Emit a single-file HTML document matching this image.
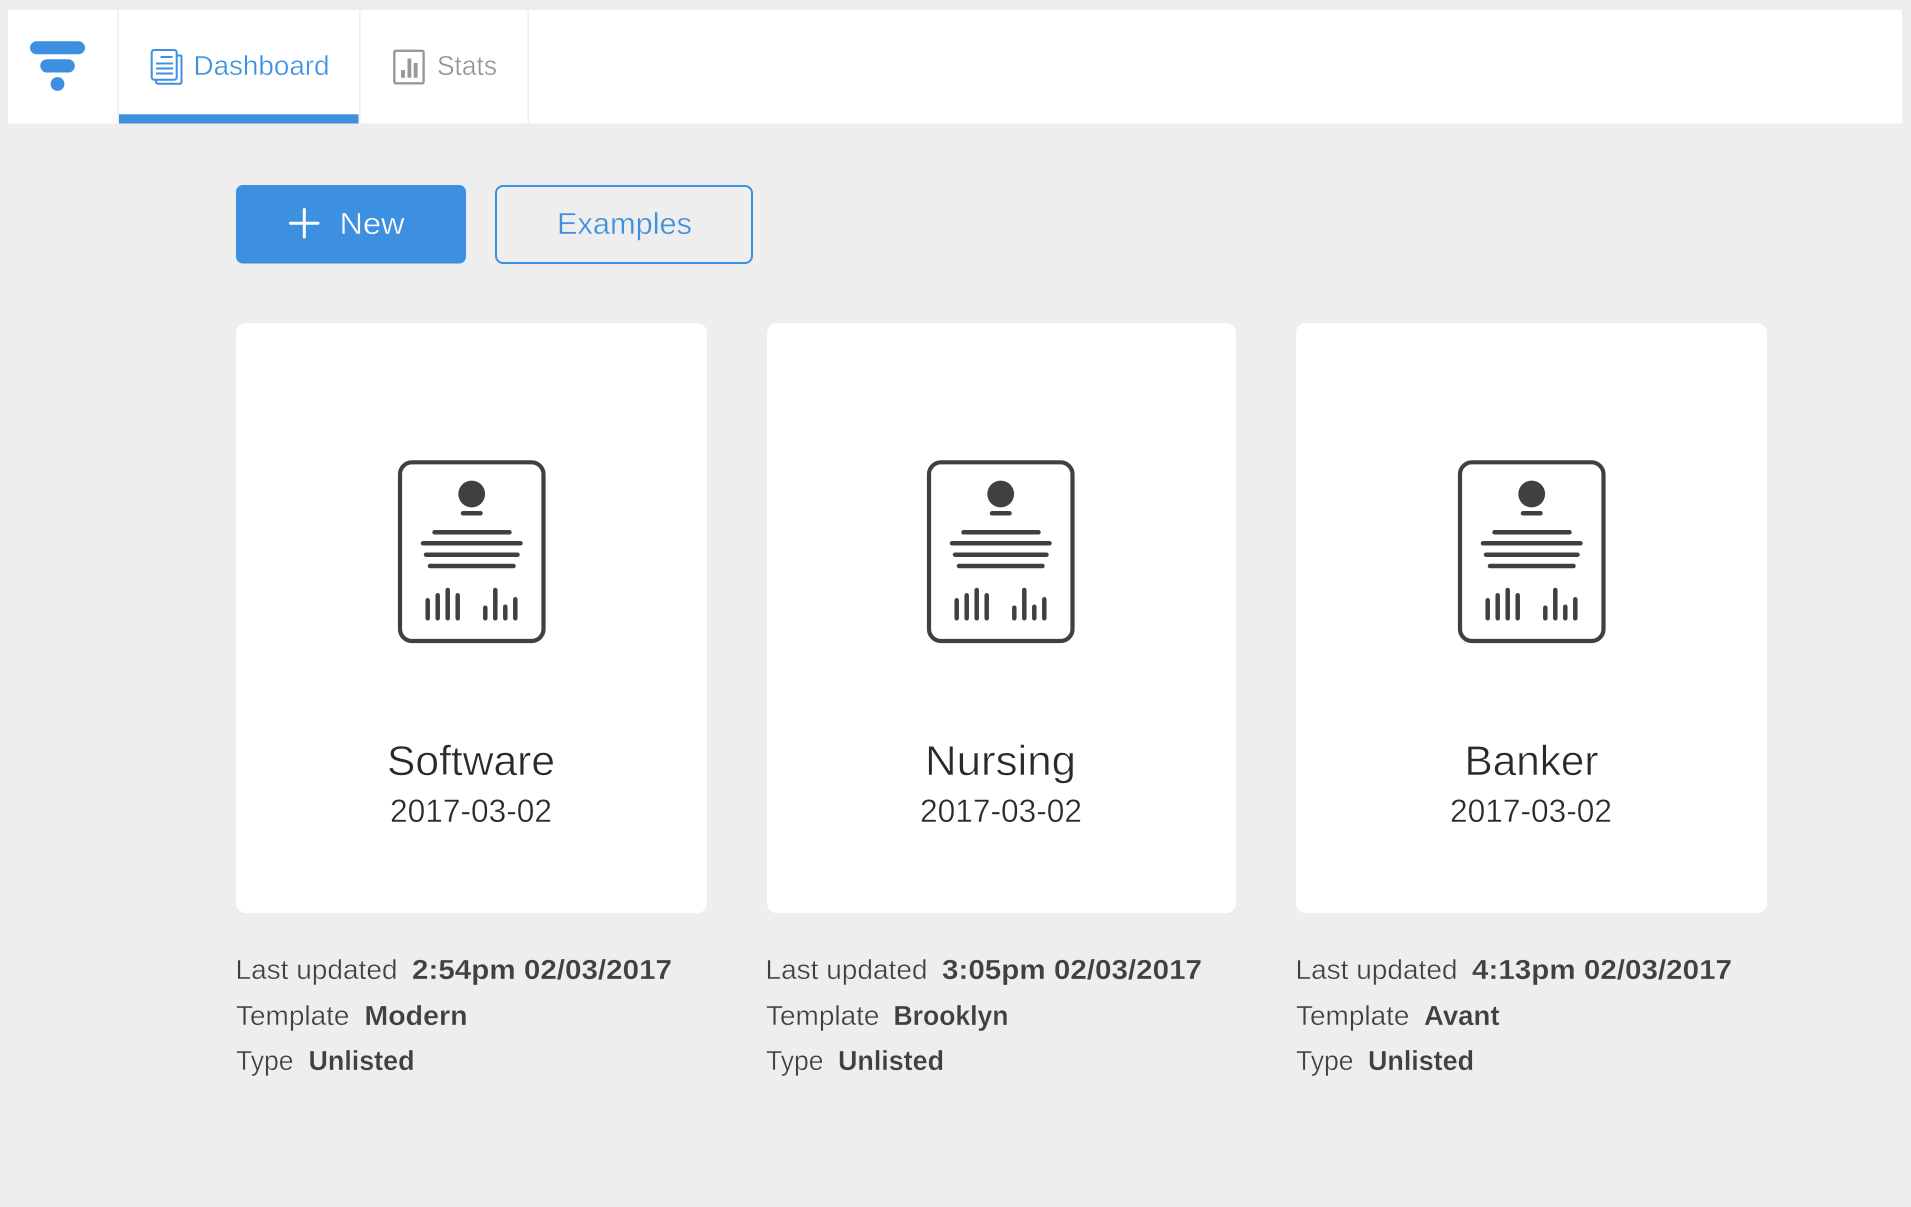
<!DOCTYPE html>
<html lang="en">
<head>
<meta charset="utf-8">
<title>Dashboard</title>
<style>
html,body{margin:0;padding:0;background:#eee;width:1911px;height:1207px;overflow:hidden}
svg{display:block}
text{font-family:"Liberation Sans",sans-serif}
.l{font-size:28px;fill:#3f3f3f;stroke:#eee;stroke-width:.4px}
.b{font-size:28px;font-weight:700;fill:#404040;stroke:#eee;stroke-width:.25px}
.t{font-size:42px;fill:#2a2a2a;stroke:#fff;stroke-width:.6px}
.d{font-size:32px;fill:#2a2a2a;stroke:#fff;stroke-width:.4px}
</style>
</head>
<body>
<svg width="1911" height="1207" viewBox="0 0 1911 1207" xmlns="http://www.w3.org/2000/svg">
<defs>
<g id="doc" fill="none" stroke="#404040" stroke-linecap="round">
<rect x="20" y="22.300" width="143.500" height="178.700" rx="12" stroke-width="4.200"/>
<circle cx="91.700" cy="54" r="13.400" fill="#404040" stroke="none"/>
<path stroke-width="4.500" d="M83 73.300H100.500M54.500 92.300H129.500M43 103.300H140.500M46 114.700H137.500M50 126H133.500"/>
<path stroke-width="4.500" d="M47.700 160.300V178.300M57.700 155.300V178.300M67.700 150V178.300M77.700 155.300V178.300M105.300 167.700V178.300M115.300 150V178.300M125.300 166.700V178.300M135.300 159.300V178.300"/>
</g>
</defs>
<rect width="1911" height="1207" fill="#eeeeee"/>

<!-- nav -->
<rect x="8" y="10" width="1894" height="113.500" fill="#fff"/>
<rect x="117.500" y="10" width="1.500" height="113.500" fill="#eeeeee"/>
<rect x="359" y="10" width="1.500" height="113.500" fill="#eeeeee"/>
<rect x="527.500" y="10" width="1.500" height="113.500" fill="#eeeeee"/>
<rect x="119" y="114.300" width="239.500" height="9.200" fill="#3d90e0"/>
<!-- logo -->
<rect x="30" y="41.300" width="55" height="13" rx="6.500" fill="#3d90e0"/>
<rect x="40.300" y="59.200" width="34.500" height="13.300" rx="6.600" fill="#3d90e0"/>
<circle cx="57.500" cy="84" r="6.900" fill="#3d90e0"/>
<!-- dashboard icon -->
<g fill="none" stroke="#3d90e0" stroke-width="2" stroke-linejoin="round">
<path d="M177 55.500H180Q181.500 55.500 181.500 57V82Q181.500 83.700 180 83.700H158Q156.200 83.700 156.200 82V80"/>
<rect x="151.700" y="50" width="25" height="29.800" rx="2.500"/>
<path d="M160.500 57H172.500M156 63.500H173M156 68.500H173M156 73.500H173"/>
</g>
<text x="193.500" y="75" font-size="28" fill="#3d90e0" stroke="#fff" stroke-width=".4" textLength="136" lengthAdjust="spacingAndGlyphs">Dashboard</text>
<!-- stats icon -->
<rect x="394.300" y="50.800" width="29.300" height="32.500" rx="1.500" fill="none" stroke="#999" stroke-width="2.400"/>
<path fill="#999" d="M401 70h4V77.700h-4zM407.500 58.500h3.800V77.700h-3.800zM413.700 63h3.900V77.700h-3.900z"/>
<text x="437" y="75" font-size="28" fill="#949494" stroke="#fff" stroke-width=".4" textLength="60" lengthAdjust="spacingAndGlyphs">Stats</text>

<!-- buttons -->
<rect x="236" y="185" width="230" height="78.500" rx="7" fill="#3d90e0"/>
<path d="M304.300 209.500V237M290.500 223.300H318" fill="none" stroke="#fff" stroke-width="3" stroke-linecap="round"/>
<text x="339.500" y="234" font-size="31" fill="#fff" stroke="#3d90e0" stroke-width=".4" textLength="65" lengthAdjust="spacingAndGlyphs">New</text>
<rect x="496" y="186" width="256" height="77" rx="7" fill="none" stroke="#3d90e0" stroke-width="2"/>
<text x="557" y="234" font-size="31" fill="#3d90e0" stroke="#eee" stroke-width=".4" textLength="135" lengthAdjust="spacingAndGlyphs">Examples</text>

<!-- cards -->
<rect x="236" y="323" width="471" height="590" rx="10" fill="#fff"/>
<rect x="767" y="323" width="469" height="590" rx="10" fill="#fff"/>
<rect x="1296" y="323" width="471" height="590" rx="10" fill="#fff"/>

<use href="#doc" x="380" y="440"/>
<use href="#doc" x="909" y="440"/>
<use href="#doc" x="1440" y="440"/>

<text class="t" x="387" y="775" textLength="168" lengthAdjust="spacingAndGlyphs">Software</text>
<text class="d" x="390" y="822" textLength="162" lengthAdjust="spacingAndGlyphs">2017-03-02</text>
<text class="t" x="925" y="775" textLength="151" lengthAdjust="spacingAndGlyphs">Nursing</text>
<text class="d" x="920" y="822" textLength="162" lengthAdjust="spacingAndGlyphs">2017-03-02</text>
<text class="t" x="1464.500" y="775" textLength="134" lengthAdjust="spacingAndGlyphs">Banker</text>
<text class="d" x="1450" y="822" textLength="162" lengthAdjust="spacingAndGlyphs">2017-03-02</text>

<!-- card 1 meta -->
<text class="l" x="235.500" y="979" textLength="162" lengthAdjust="spacingAndGlyphs">Last updated</text>
<text class="b" x="412" y="979" textLength="260" lengthAdjust="spacingAndGlyphs">2:54pm 02/03/2017</text>
<text class="l" x="236" y="1025" textLength="113.500" lengthAdjust="spacingAndGlyphs">Template</text>
<text class="b" x="364.500" y="1025" textLength="103" lengthAdjust="spacingAndGlyphs">Modern</text>
<text class="l" x="236" y="1070" textLength="57.500" lengthAdjust="spacingAndGlyphs">Type</text>
<text class="b" x="308.500" y="1070" textLength="106" lengthAdjust="spacingAndGlyphs">Unlisted</text>

<!-- card 2 meta -->
<text class="l" x="765.500" y="979" textLength="162" lengthAdjust="spacingAndGlyphs">Last updated</text>
<text class="b" x="942" y="979" textLength="260" lengthAdjust="spacingAndGlyphs">3:05pm 02/03/2017</text>
<text class="l" x="766" y="1025" textLength="113.500" lengthAdjust="spacingAndGlyphs">Template</text>
<text class="b" x="893.500" y="1025" textLength="115" lengthAdjust="spacingAndGlyphs">Brooklyn</text>
<text class="l" x="766" y="1070" textLength="57.500" lengthAdjust="spacingAndGlyphs">Type</text>
<text class="b" x="838" y="1070" textLength="106" lengthAdjust="spacingAndGlyphs">Unlisted</text>

<!-- card 3 meta -->
<text class="l" x="1295.500" y="979" textLength="162" lengthAdjust="spacingAndGlyphs">Last updated</text>
<text class="b" x="1472" y="979" textLength="260" lengthAdjust="spacingAndGlyphs">4:13pm 02/03/2017</text>
<text class="l" x="1296" y="1025" textLength="113.500" lengthAdjust="spacingAndGlyphs">Template</text>
<text class="b" x="1424" y="1025" textLength="75.500" lengthAdjust="spacingAndGlyphs">Avant</text>
<text class="l" x="1296" y="1070" textLength="57.500" lengthAdjust="spacingAndGlyphs">Type</text>
<text class="b" x="1368" y="1070" textLength="106" lengthAdjust="spacingAndGlyphs">Unlisted</text>
</svg>
</body>
</html>
